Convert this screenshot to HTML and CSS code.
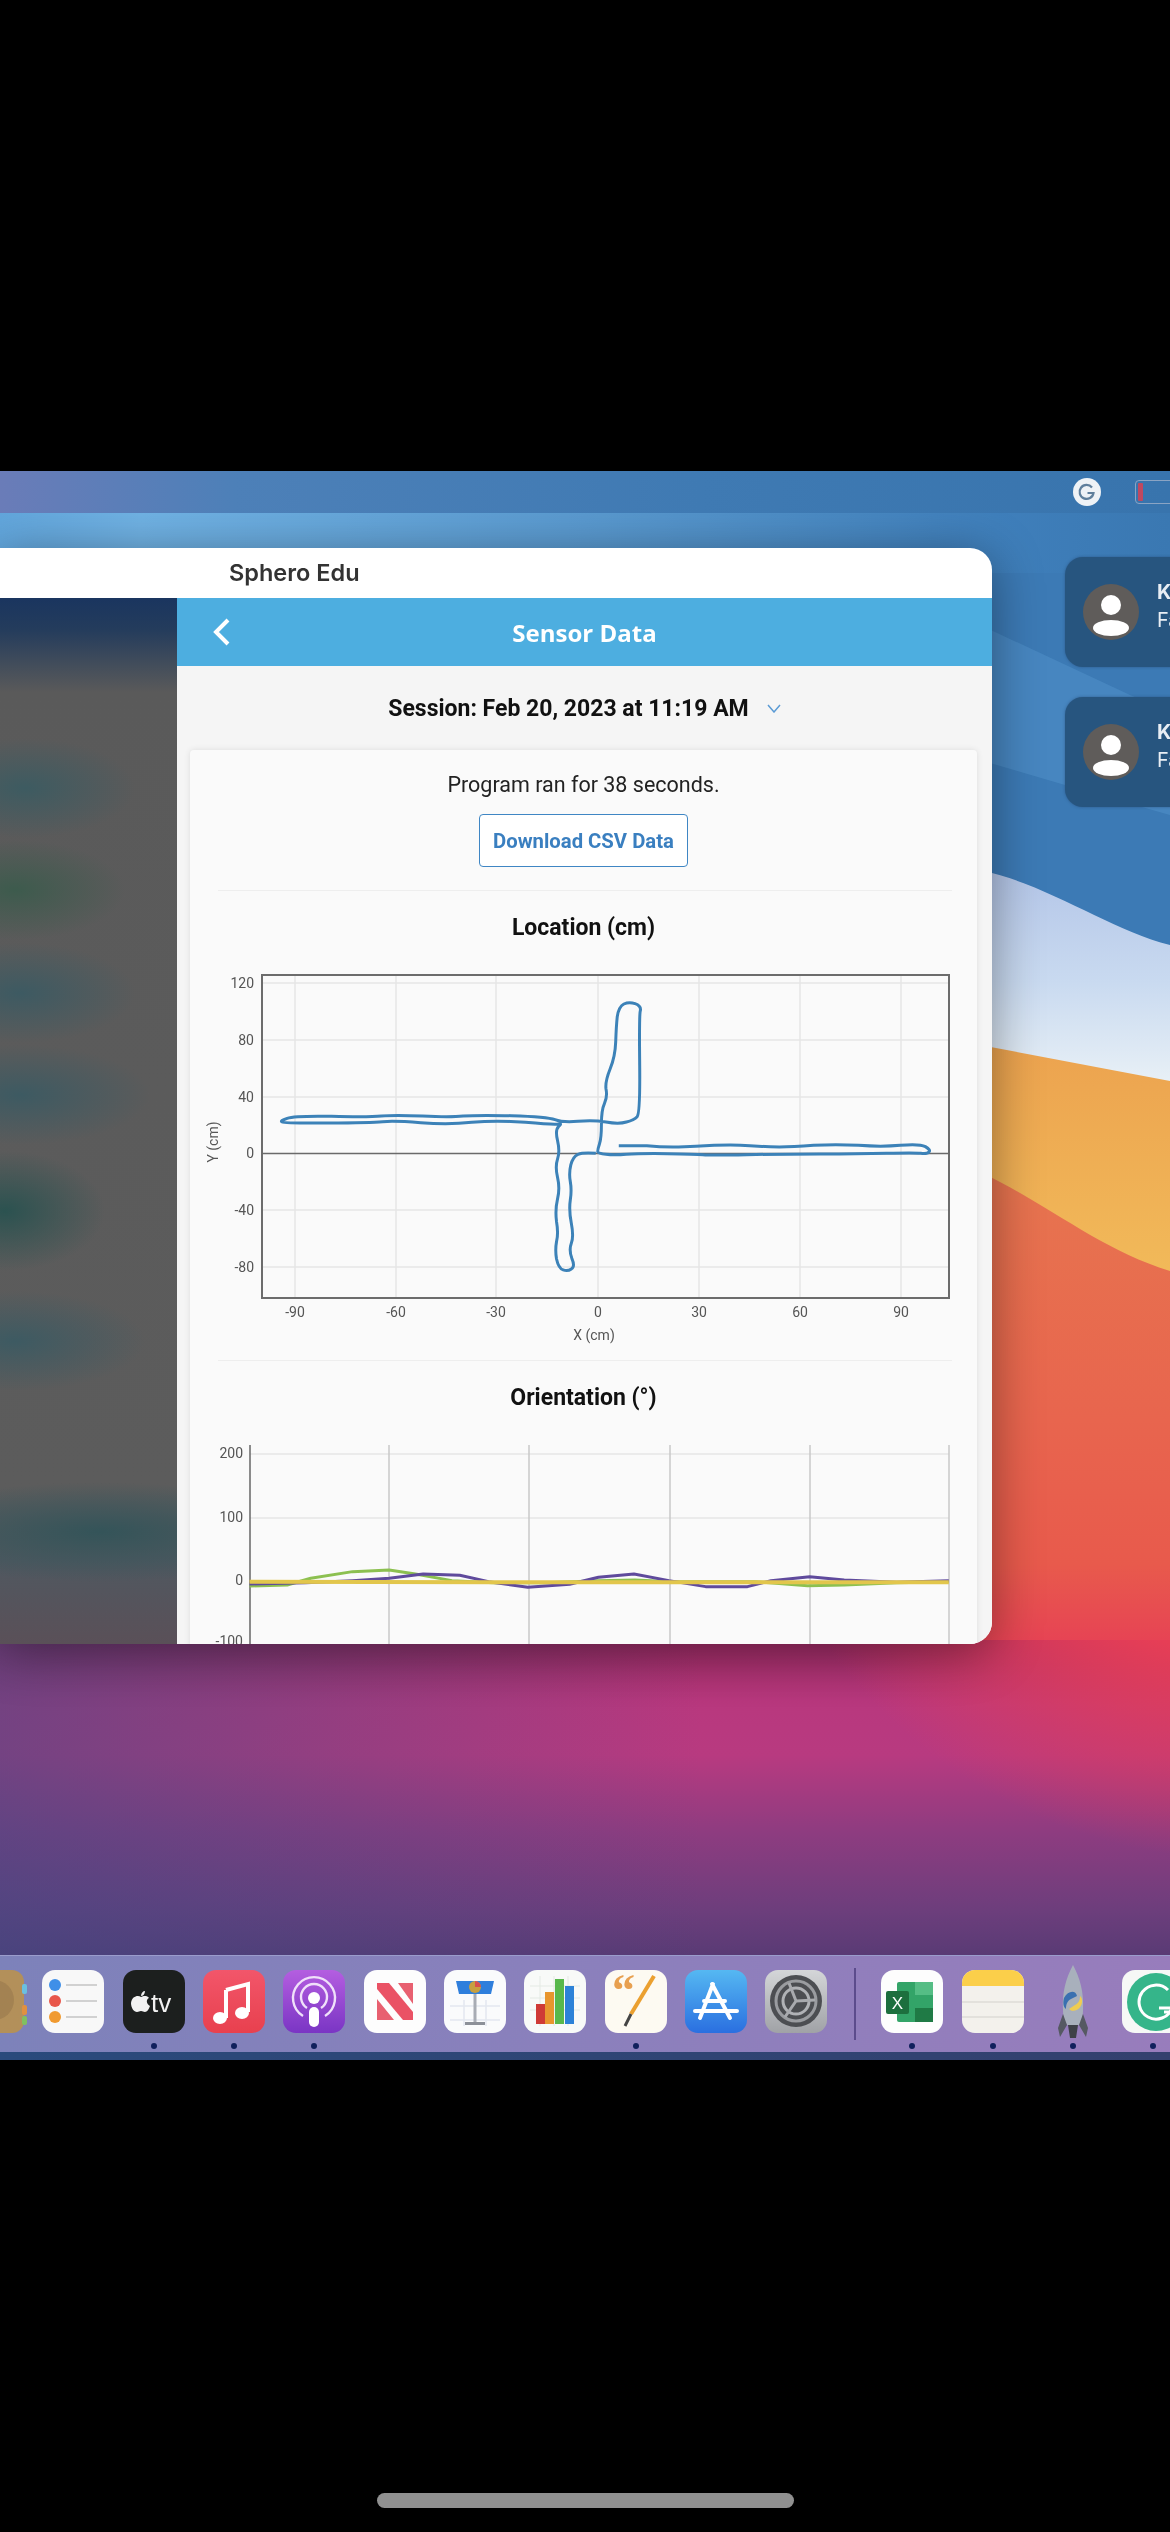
FILE: index.html
```html
<!DOCTYPE html>
<html lang="en">
<head>
    <meta charset="UTF-8">
    <title>Sphero Edu</title>
    <link rel="stylesheet" href="styles.css">
</head>
<body>
    <div class="top-gap"></div>
    <div class="screen">
        <svg class="wallpaper" viewBox="0 471 1170 1589" preserveAspectRatio="none">
            <defs>
                <linearGradient id="topBand" x1="0" x2="1" y1="0" y2="0">
                    <stop offset="0" stop-color="#62a6dc"/>
                    <stop offset="0.12" stop-color="#70b2e4"/>
                    <stop offset="0.5" stop-color="#5a9ad0"/>
                    <stop offset="0.85" stop-color="#3f7fbb"/>
                    <stop offset="1" stop-color="#3a78b2"/>
                </linearGradient>
                <linearGradient id="whiteBand" x1="0" x2="0" y1="0" y2="1">
                    <stop offset="0" stop-color="#b4c6e8"/>
                    <stop offset="0.5" stop-color="#c9daf0"/>
                    <stop offset="1" stop-color="#ecf3f7"/>
                </linearGradient>
                <linearGradient id="orangeBand" x1="0" x2="0" y1="0" y2="1">
                    <stop offset="0" stop-color="#eca34f"/>
                    <stop offset="1" stop-color="#f2bb5a"/>
                </linearGradient>
                <linearGradient id="redBand" gradientUnits="userSpaceOnUse" x1="0" x2="0" y1="1180" y2="1660">
                    <stop offset="0" stop-color="#e7744f"/>
                    <stop offset="0.5" stop-color="#e8654e"/>
                    <stop offset="0.8" stop-color="#e85a4c"/>
                    <stop offset="1" stop-color="#e63e56"/>
                </linearGradient>
                <linearGradient id="lowV" x1="0" x2="0" y1="0" y2="1">
                    <stop offset="0" stop-color="#a02c66"/>
                    <stop offset="0.2" stop-color="#b8387e"/>
                    <stop offset="0.36" stop-color="#b83a80"/>
                    <stop offset="0.6" stop-color="#8e3c80"/>
                    <stop offset="0.85" stop-color="#6c3e7c"/>
                    <stop offset="1" stop-color="#573a74"/>
                </linearGradient>
                <linearGradient id="lowH" x1="0" x2="1" y1="0" y2="0">
                    <stop offset="0" stop-color="#3c4a84" stop-opacity="0.55"/>
                    <stop offset="0.6" stop-color="#3c4a84" stop-opacity="0"/>
                </linearGradient>
                <radialGradient id="lowRed" gradientUnits="userSpaceOnUse" cx="1245" cy="1340" r="520">
                    <stop offset="0.6" stop-color="#e63e56"/>
                    <stop offset="1" stop-color="#e63e56" stop-opacity="0"/>
                </radialGradient>
            </defs>
            <rect x="0" y="471" width="1170" height="1200" fill="#3c7ab5"/>
            <rect x="0" y="513" width="1170" height="60" fill="url(#topBand)"/>
            <path d="M980 625 L1130 695 L1170 712 V815 L1065 785 L980 760 Z" fill="#4b8bc5" opacity="0.7"/>
            <path d="M980 870 C1050 885 1110 930 1170 945 V1095 H980 Z" fill="url(#whiteBand)"/>
            <path d="M980 1045 L1170 1081 V1290 H980 Z" fill="url(#orangeBand)"/>
            <path d="M980 1172 C1050 1205 1100 1250 1170 1271 V1680 H980 Z" fill="url(#redBand)"/>
            <rect x="0" y="1640" width="1170" height="320" fill="url(#lowV)"/>
            <rect x="0" y="1640" width="1170" height="320" fill="url(#lowH)"/>
            <rect x="700" y="1640" width="470" height="320" fill="url(#lowRed)"/>
        </svg>

        <div class="menubar">
            <svg class="menu-g" viewBox="0 0 28 28">
                <circle cx="14" cy="14" r="14" fill="#eef2f6"/>
                <path d="M19 9.5 A7 7 0 1 0 20.5 15 H14.5" fill="none" stroke="#5f7f9c" stroke-width="2.2"/>
            </svg>
            <div class="battery"><span class="battery-level"></span></div>
        </div>

        <div class="desk">
            <div class="window">
                <div class="titlebar">Sphero Edu</div>
                <div class="window-body">
                    <div class="sidebar"></div>
                    <div class="panel">
                        <div class="panel-header">
                            <svg class="back" viewBox="0 0 18 28"><path d="M15 2 L3 14 L15 26" fill="none" stroke="#fff" stroke-width="4"/></svg>
                            <div class="panel-title">Sensor Data</div>
                        </div>
                        <div class="session">
                            <span>Session: Feb 20, 2023 at 11:19 AM</span>
                            <svg class="session-arrow" viewBox="0 0 14 9"><path d="M1 1 L7 8 L13 1" fill="none" stroke="#5b9bd5" stroke-width="1.5"/></svg>
                        </div>
                        <div class="card">
                            <div class="card-top">
                                <p class="ran">Program ran for 38 seconds.</p>
                                <button class="csv">Download CSV Data</button>
                            </div>
                            <div class="divider"></div>
                            <h2 class="chart-title">Location (cm)</h2>
                            <svg class="chart chart-location" viewBox="190 964 787 386">
                                <g class="grid-light">
                                    <path d="M295 975V1298M396 975V1298M496 975V1298M598 975V1298M699 975V1298M800 975V1298M901 975V1298"/>
                                    <path d="M262 983H949M262 1040H949M262 1097H949M262 1210H949M262 1267H949"/>
                                </g>
                                <rect class="plot-box" x="262" y="975" width="687" height="323"/>
                                <path class="zero-line" d="M262 1153.500H949"/>
                                <g class="tick-y">
                                    <text x="254" y="988">120</text>
                                    <text x="254" y="1045">80</text>
                                    <text x="254" y="1102">40</text>
                                    <text x="254" y="1158">0</text>
                                    <text x="254" y="1215">-40</text>
                                    <text x="254" y="1272">-80</text>
                                </g>
                                <g class="tick-x">
                                    <text x="295" y="1317">-90</text>
                                    <text x="396" y="1317">-60</text>
                                    <text x="496" y="1317">-30</text>
                                    <text x="598" y="1317">0</text>
                                    <text x="699" y="1317">30</text>
                                    <text x="800" y="1317">60</text>
                                    <text x="901" y="1317">90</text>
                                    <text x="594" y="1340">X (cm)</text>
                                    <text x="0" y="0" transform="translate(218 1142) rotate(-90)">Y (cm)</text>
                                </g>
                                <g transform="translate(180 900) scale(0.5102 0.3333)">
                                    <path class="trace" d="M860 737 L915 737 Q945 742 977 741 Q1010 740 1047 736 Q1085 733 1117 737 Q1150 741 1175 741 Q1200 741 1242 736 Q1285 732 1330 736 Q1375 741 1412 736 Q1450 731 1461 740 Q1472 750 1468 756 Q1465 762 1452 760 Q1440 758 1385 760 Q1330 762 1255 762 Q1180 762 1110 764 Q1040 766 1025 764 Q1010 762 955 761 Q900 760 875 763 Q850 766 835 763 Q820 760 819 756 Q818 752 822 733 Q826 715 826 672 Q826 630 832 610 Q838 590 835 567 Q833 545 843 507 Q853 470 854 425 Q855 380 857 350 Q860 320 870 312 Q880 305 892 311 Q905 318 902 334 Q900 350 901 495 Q902 640 896 650 Q890 660 875 666 Q860 673 835 666 Q810 660 780 664 Q750 668 735 659 Q720 650 650 647 Q580 645 555 648 Q530 652 475 648 Q420 645 395 648 Q370 652 297 649 Q225 647 210 655 Q195 663 200 666 Q205 670 290 669 Q375 668 397 665 Q420 662 472 668 Q525 675 572 667 Q620 660 677 667 Q735 675 742 672 Q750 670 742 680 Q735 690 740 722 Q745 755 740 777 Q735 800 740 832 Q745 865 740 897 Q735 930 738 965 Q742 1000 738 1025 Q735 1050 738 1077 Q742 1105 751 1110 Q760 1115 767 1107 Q775 1100 768 1075 Q762 1050 767 1030 Q772 1010 767 970 Q762 930 765 900 Q768 870 765 845 Q762 820 766 795 Q770 770 780 763 Q790 757 815 760"/>
                                </g>
                            </svg>
                            <div class="divider"></div>
                            <h2 class="chart-title">Orientation (°)</h2>
                            <svg class="chart chart-orientation" viewBox="190 1434 787 220">
                                <path class="grid-light" d="M250 1454H949M250 1518H949M250 1582H949"/>
                                <path class="grid-dark" d="M389 1445V1654M529 1445V1654M670 1445V1654M810 1445V1654M949 1445V1654"/>
                                <path class="axis-line" d="M250 1445V1654"/>
                                <g class="tick-y">
                                    <text x="243" y="1458">200</text>
                                    <text x="243" y="1522">100</text>
                                    <text x="243" y="1585">0</text>
                                    <text x="243" y="1646">-100</text>
                                </g>
                                <g transform="translate(180 1340) scale(0.523 0.3333)">
                                    <path class="line-green" d="M133 738 L205 735 250 715 330 695 400 690 450 702 520 722 600 728 700 728 800 722 870 720 940 725 1100 725 1200 737 1270 735 1370 728 1470 725"/>
                                    <path class="line-purple" d="M133 732 L240 728 330 722 400 715 465 702 535 706 590 725 665 742 745 733 800 712 868 702 935 722 1005 740 1085 740 1130 722 1204 710 1270 720 1370 727 1470 722"/>
                                    <path class="line-yellow" d="M133 725 L600 727 1470 727"/>
                                </g>
                            </svg>
                        </div>
                    </div>
                </div>
            </div>

            <div class="notifications">
                <div class="notice">
                    <svg class="avatar" viewBox="0 0 56 56">
                        <circle cx="28" cy="28" r="28" fill="#5f5c5a"/>
                        <circle cx="28" cy="21" r="10" fill="#fff"/>
                        <ellipse cx="28" cy="44" rx="18" ry="8" fill="#fff"/>
                    </svg>
                    <div class="notice-text"><b>K</b><span>Fa</span></div>
                </div>
                <div class="notice">
                    <svg class="avatar" viewBox="0 0 56 56">
                        <circle cx="28" cy="28" r="28" fill="#5f5c5a"/>
                        <circle cx="28" cy="21" r="10" fill="#fff"/>
                        <ellipse cx="28" cy="44" rx="18" ry="8" fill="#fff"/>
                    </svg>
                    <div class="notice-text"><b>K</b><span>Fa</span></div>
                </div>
            </div>
        </div>

        <div class="dock">
            <!-- contacts -->
            <div class="dock-item">
                <svg viewBox="0 0 66 63">
                    <rect x="0" y="0" width="62" height="63" rx="12" fill="#b3905a"/>
                    <circle cx="32" cy="30" r="20" fill="#a38252"/>
                    <rect x="60" y="14" width="5" height="10" rx="2" fill="#6ac0e0"/>
                    <rect x="60" y="35" width="5" height="10" rx="2" fill="#e09040"/>
                    <rect x="60" y="46" width="5" height="9" rx="2" fill="#80c060"/>
                </svg>
                <i class="dot off"></i>
            </div>
            <!-- reminders -->
            <div class="dock-item">
                <svg viewBox="0 0 62 63">
                    <rect width="62" height="63" rx="13" fill="#f8f8f8"/>
                    <circle cx="13" cy="15" r="6" fill="#3f8fe8"/>
                    <circle cx="13" cy="31" r="6" fill="#e8564a"/>
                    <circle cx="13" cy="47" r="6" fill="#f09a30"/>
                    <path d="M24 15H55M24 31H55M24 47H55" stroke="#c4c4c4" stroke-width="1.5"/>
                </svg>
                <i class="dot off"></i>
            </div>
            <!-- tv -->
            <div class="dock-item">
                <svg viewBox="0 0 62 63">
                    <rect width="62" height="63" rx="13" fill="#1c1f1e"/>
                    <path d="M18 27 C15 25 9 26 8 33 C8 38 11 42 14 42 C16 42 16 41 18 41 C20 41 20 42 22 42 C24 42 26 39 27 36 C23 34 23 29 26 28 C24 25 20 26 18 27 Z M18 26 C18 23 20 21 22 21 C22 24 20 26 18 26 Z" fill="#f2f2f2"/>
                    <text class="tv-text" x="28" y="42">tv</text>
                </svg>
                <i class="dot"></i>
            </div>
            <!-- music -->
            <div class="dock-item">
                <svg viewBox="0 0 62 63">
                    <defs><linearGradient id="musicBg" x1="0" x2="0" y1="0" y2="1"><stop offset="0" stop-color="#f2566a"/><stop offset="1" stop-color="#e8404e"/></linearGradient></defs>
                    <rect width="62" height="63" rx="13" fill="url(#musicBg)"/>
                    <path d="M23 20 L45 14 V42 M23 20 V48" fill="none" stroke="#fff" stroke-width="4"/>
                    <ellipse cx="17" cy="48" rx="7" ry="6" fill="#fff"/>
                    <ellipse cx="39" cy="43" rx="7" ry="6" fill="#fff"/>
                </svg>
                <i class="dot"></i>
            </div>
            <!-- podcasts -->
            <div class="dock-item">
                <svg viewBox="0 0 62 63">
                    <defs><linearGradient id="podBg" x1="0" x2="0" y1="0" y2="1"><stop offset="0" stop-color="#b45ee0"/><stop offset="1" stop-color="#7a35c4"/></linearGradient></defs>
                    <rect width="62" height="63" rx="13" fill="url(#podBg)"/>
                    <path d="M20 46 A21 21 0 1 1 42 46 M24 38 A13 13 0 1 1 38 38" fill="none" stroke="#f0e0fa" stroke-width="2.4"/>
                    <circle cx="31" cy="28" r="6" fill="#fff"/>
                    <rect x="26" y="37" width="10" height="20" rx="5" fill="#fff"/>
                </svg>
                <i class="dot"></i>
            </div>
            <!-- news -->
            <div class="dock-item">
                <svg viewBox="0 0 62 63">
                    <rect width="62" height="63" rx="13" fill="#fdfdfd"/>
                    <path d="M13 29 L30 50 H13 Z M34 13 H49 V34 Z" fill="#e86070"/>
                    <path d="M13 13 H25 L49 42 V50 H39 L13 19 Z" fill="#ea5265"/>
                </svg>
                <i class="dot off"></i>
            </div>
            <!-- keynote -->
            <div class="dock-item">
                <svg viewBox="0 0 62 63">
                    <rect width="62" height="63" rx="13" fill="#fafbfc"/>
                    <path d="M6 36H56M6 50H56M20 30V56M42 30V56" stroke="#e4e8f0" stroke-width="1.5"/>
                    <path d="M12 11 H50 L47 24 H15 Z" fill="#2f7fdc"/>
                    <circle cx="31" cy="17" r="6" fill="#c8a040"/>
                    <path d="M31 17 V11 A6 6 0 0 1 37 17 Z" fill="#d85050"/>
                    <rect x="29.500" y="24" width="3" height="28" fill="#a8acb4"/>
                    <rect x="21" y="52" width="20" height="3" fill="#8c9098"/>
                </svg>
                <i class="dot off"></i>
            </div>
            <!-- numbers -->
            <div class="dock-item">
                <svg viewBox="0 0 62 63">
                    <rect width="62" height="63" rx="13" fill="#f8faf8"/>
                    <path d="M6 16H56M6 28H56M6 40H56M16 6V56M30 6V56M44 6V56" stroke="#e4eae4"/>
                    <rect x="12" y="34" width="9" height="20" fill="#cf3a36"/>
                    <rect x="21" y="22" width="9" height="32" fill="#e8962e"/>
                    <rect x="31" y="9" width="9" height="45" fill="#58b84c"/>
                    <rect x="41" y="16" width="9" height="38" fill="#2c82d8"/>
                </svg>
                <i class="dot off"></i>
            </div>
            <!-- pages -->
            <div class="dock-item">
                <svg viewBox="0 0 62 63">
                    <rect width="62" height="63" rx="13" fill="#fdfaf2"/>
                    <text class="quote" x="7" y="36">“</text>
                    <path d="M49 6 L26 44" stroke="#eba030" stroke-width="4"/>
                    <path d="M26 44 L20 56" stroke="#444" stroke-width="3"/>
                </svg>
                <i class="dot"></i>
            </div>
            <!-- app store -->
            <div class="dock-item">
                <svg viewBox="0 0 62 63">
                    <defs><linearGradient id="storeBg" x1="0" x2="0" y1="0" y2="1"><stop offset="0" stop-color="#55b8f2"/><stop offset="1" stop-color="#2a6fe0"/></linearGradient></defs>
                    <rect width="62" height="63" rx="13" fill="url(#storeBg)"/>
                    <path d="M28 14 L15 48 M27 14 L45 48 M10 41 H52 M19 31 H40" stroke="#fff" stroke-width="4" stroke-linecap="round" fill="none"/>
                </svg>
                <i class="dot off"></i>
            </div>
            <!-- settings -->
            <div class="dock-item">
                <svg viewBox="0 0 62 63">
                    <defs><linearGradient id="gearBg" x1="0" x2="0" y1="0" y2="1"><stop offset="0" stop-color="#d4d6d8"/><stop offset="1" stop-color="#a0a2a6"/></linearGradient></defs>
                    <rect width="62" height="63" rx="13" fill="url(#gearBg)"/>
                    <circle cx="31" cy="31" r="26" fill="#4c4e52"/>
                    <circle cx="31" cy="31" r="20" fill="none" stroke="#9a9ca0" stroke-width="3"/>
                    <circle cx="31" cy="31" r="13" fill="none" stroke="#b0b2b6" stroke-width="3"/>
                    <path d="M31 31 L24 13 M31 31 L50 30 M31 31 L20 47" stroke="#a8aaae" stroke-width="3"/>
                </svg>
                <i class="dot off"></i>
            </div>
            <div class="dock-sep"></div>
            <!-- excel -->
            <div class="dock-item">
                <svg viewBox="0 0 62 63">
                    <rect width="62" height="63" rx="13" fill="#fdfdfd"/>
                    <rect x="16" y="12" width="36" height="40" rx="2" fill="#33a468"/>
                    <rect x="34" y="12" width="18" height="13" fill="#55bd85"/>
                    <rect x="34" y="38" width="18" height="14" fill="#1f7a45"/>
                    <rect x="5" y="21" width="23" height="23" rx="2" fill="#1d6f3e"/>
                    <text class="excel-x" x="16.500" y="39">X</text>
                </svg>
                <i class="dot"></i>
            </div>
            <!-- notes -->
            <div class="dock-item">
                <svg viewBox="0 0 62 63">
                    <rect width="62" height="63" rx="13" fill="#f3f1ec"/>
                    <path d="M0 16 V13 A13 13 0 0 1 13 0 H49 A13 13 0 0 1 62 13 V16 Z" fill="#fbcf4a"/>
                    <path d="M0 32H62M0 47H62" stroke="#dedcd6" stroke-width="1.500"/>
                </svg>
                <i class="dot"></i>
            </div>
            <!-- python launcher -->
            <div class="dock-item">
                <svg class="rocket" viewBox="0 0 62 63">
                    <path d="M31 -5 C24 8 20 22 21 40 C21 48 23 52 25 55 H37 C39 52 41 48 41 40 C42 22 38 8 31 -5 Z" fill="#a8b0bc"/>
                    <path d="M21 44 L16 58 L18 67 L25 55 Z M41 44 L46 58 L44 67 L37 55 Z" fill="#555962"/>
                    <path d="M26 55 L28 68 H34 L36 55 Z" fill="#3e4148"/>
                    <path d="M22 28 C26 20 34 20 35 26 L29 29 C25 31 24 35 24 39 C21 37 21 32 22 28 Z" fill="#3a70b0"/>
                    <path d="M40 30 C41 38 32 44 27 39 L33 35 C37 33 38 30 38 26 C39 27 40 28 40 30 Z" fill="#f0cc50"/>
                </svg>
                <i class="dot"></i>
            </div>
            <!-- grammarly -->
            <div class="dock-item">
                <svg viewBox="0 0 62 63">
                    <rect width="62" height="63" rx="13" fill="#f6f8f6"/>
                    <circle cx="34" cy="32" r="29" fill="#35b58a"/>
                    <path d="M46 20 A17 17 0 1 0 50 38 H37" fill="none" stroke="#fff" stroke-width="3"/>
                    <path d="M50 32 L53 42 L42 42" fill="none" stroke="#fff" stroke-width="3"/>
                </svg>
                <i class="dot"></i>
            </div>
        </div>
        <div class="dock-edge"></div>
    </div>
    <div class="bottom-gap"><div class="home-bar"></div></div>
</body>
</html>
```

FILE: styles.css
```css
body {
    margin: 0;
    height: 2532px;
    overflow: hidden;
    background: #000;
    font-family: Roboto, "Liberation Sans", sans-serif;
}

.top-gap {
    height: 471px;
}

.screen {
    position: relative;
    height: 1589px;
    overflow: hidden;
    filter: blur(0.6px);
}

.wallpaper {
    position: absolute;
    top: 0;
    left: 0;
    width: 1170px;
    height: 1589px;
}

.menubar {
    position: relative;
    display: flex;
    align-items: center;
    height: 42px;
    padding-left: 1073px;
    gap: 34px;
    background: linear-gradient(90deg, #6a7cb8 0%, #4d80b8 20%, #3f7ab3 60%, #3874ad 100%);
}

.menu-g {
    width: 28px;
    height: 28px;
    flex-shrink: 0;
}

.battery {
    flex-shrink: 0;
    width: 60px;
    height: 18px;
    border: 1.5px solid #8aa4c4;
    border-radius: 4px;
    padding: 2px;
}

.battery-level {
    display: block;
    width: 5px;
    height: 100%;
    border-radius: 1px;
    background: #c04860;
}

.desk {
    position: relative;
    display: flex;
    align-items: flex-start;
    height: 1442px;
    overflow: hidden;
}

.window {
    flex-shrink: 0;
    width: 992px;
    height: 1096px;
    margin-top: 35px;
    overflow: hidden;
    border-radius: 0 22px 22px 0;
    background: #fff;
    box-shadow: 0 8px 50px rgba(0, 0, 0, 0.4);
}

.titlebar {
    height: 50px;
    padding-left: 229px;
    line-height: 50px;
    font-family: Inter, sans-serif;
    font-size: 23.500px;
    font-weight: 600;
    color: #333;
}

.window-body {
    display: flex;
    height: 1046px;
}

.sidebar {
    width: 177px;
    flex-shrink: 0;
    background:
        radial-gradient(ellipse 110px 50px at 25px 190px, #3d5b61, transparent),
        radial-gradient(ellipse 110px 50px at 15px 292px, #3d5b4d, transparent),
        radial-gradient(ellipse 115px 50px at 20px 395px, #3d5a62, transparent),
        radial-gradient(ellipse 130px 50px at 20px 497px, #3d5a62, transparent),
        radial-gradient(ellipse 100px 60px at 5px 613px, #2b5250, transparent),
        radial-gradient(ellipse 130px 50px at 15px 743px, #3d5a62, transparent),
        radial-gradient(ellipse 220px 50px at 100px 934px, #345459, transparent),
        linear-gradient(180deg, #1a355f 0%, #243c5c 3%, #5a5a5a 9%, #5c5c5c 85%, #505860 92%, #5a5058 100%);
}

.panel {
    flex: 1;
    min-width: 0;
    background: #f5f5f5;
}

.panel-header {
    display: grid;
    grid-template-columns: 1fr auto 1fr;
    align-items: center;
    height: 68px;
    padding: 0 36px;
    background: #4daee0;
}

.back {
    width: 18px;
    height: 28px;
}

.panel-title {
    font-family: "Open Sans", sans-serif;
    font-size: 24px;
    font-weight: 700;
    color: #fff;
}

.session {
    display: flex;
    align-items: center;
    justify-content: center;
    gap: 18px;
    height: 84px;
    font-size: 23px;
    font-weight: 700;
    color: #111;
}

.session-arrow {
    width: 14px;
    height: 9px;
}

.card {
    height: 900px;
    margin: 0 15px 0 13px;
    border-radius: 4px 4px 0 0;
    background: #fafafa;
    box-shadow: 0 0 6px rgba(0, 0, 0, 0.1);
}

.card-top {
    display: flex;
    flex-direction: column;
    align-items: center;
    height: 140px;
}

.ran {
    margin: 20px 0 15px;
    line-height: 29px;
    font-size: 21.500px;
    color: #222;
}

.csv {
    width: 209px;
    height: 53px;
    padding: 0;
    border: 1.5px solid #3f86c4;
    border-radius: 4px;
    background: #fff;
    font-family: inherit;
    font-size: 20.300px;
    font-weight: 700;
    color: #3a7fc0;
}

.divider {
    height: 1px;
    margin: 0 25px 0 28px;
    background: #eeeeee;
}

.chart-title {
    margin: 0;
    height: 73px;
    line-height: 73px;
    text-align: center;
    font-size: 23px;
    font-weight: 700;
    color: #111;
}

.chart {
    display: block;
    width: 787px;
}

.chart-location {
    height: 386px;
    margin-bottom: 10px;
}

.chart-orientation {
    height: 220px;
}

.grid-light {
    fill: none;
    stroke: #e6e6e6;
    stroke-width: 1.5;
}

.grid-dark {
    fill: none;
    stroke: #c9c9c9;
    stroke-width: 1.5;
}

.plot-box {
    fill: none;
    stroke: #6c6c6c;
    stroke-width: 2;
}

.zero-line {
    fill: none;
    stroke: #6a6a6a;
    stroke-width: 1.5;
}

.axis-line {
    fill: none;
    stroke: #666;
    stroke-width: 1.5;
}

.tick-y text,
.tick-x text {
    font-size: 14px;
    fill: #555;
}

.tick-y text {
    text-anchor: end;
}

.tick-x text {
    text-anchor: middle;
}

.trace,
.line-green,
.line-purple,
.line-yellow {
    fill: none;
    stroke-linejoin: round;
    vector-effect: non-scaling-stroke;
}

.trace {
    stroke: #3c82b8;
    stroke-width: 3;
}

.line-green {
    stroke: #8cc050;
    stroke-width: 3;
}

.line-purple {
    stroke: #5f4a9c;
    stroke-width: 3;
}

.line-yellow {
    stroke: #e2c64c;
    stroke-width: 4;
}

.notifications {
    display: flex;
    flex-direction: column;
    gap: 30px;
    margin: 44px 0 0 73px;
    flex-shrink: 0;
}

.notice {
    display: flex;
    align-items: center;
    gap: 18px;
    width: 320px;
    height: 110px;
    padding-left: 18px;
    box-sizing: border-box;
    border-radius: 18px;
    background: #27557f;
    box-shadow: 0 0 3px rgba(30, 60, 100, 0.5);
}

.avatar {
    width: 56px;
    height: 56px;
    flex-shrink: 0;
}

.notice-text {
    display: flex;
    flex-direction: column;
    gap: 4px;
    margin-bottom: 12px;
    font-family: Inter, sans-serif;
    font-size: 20px;
    color: #e8eef4;
}

.dock {
    position: relative;
    display: flex;
    align-items: flex-start;
    gap: 18px;
    height: 82px;
    padding-top: 14px;
    margin-left: -38px;
    width: 1300px;
    background: linear-gradient(90deg, #7c82ba 0%, #8a80bc 45%, #9a7cbc 100%);
    border-top: 1px solid #9a9ccc;
}

.dock-item {
    width: 62.300px;
    flex-shrink: 0;
    display: flex;
    flex-direction: column;
    align-items: center;
}

.dock-item svg {
    display: block;
    width: 62px;
    height: 63px;
    overflow: visible;
}

.dock-item:first-child svg {
    width: 66px;
    margin-right: -4px;
}

.dot {
    display: block;
    width: 6px;
    height: 6px;
    margin-top: 10px;
    border-radius: 50%;
    background: #10205c;
}

.dot.off {
    visibility: hidden;
}

.dock-sep {
    flex-shrink: 0;
    width: 2px;
    height: 72px;
    margin: -2px 7px 0 9px;
    background: #5c4c8c;
}

.dock-edge {
    position: relative;
    height: 8px;
    background: linear-gradient(90deg, #2a4a7c, #34406e);
}

.tv-text {
    font-family: "Liberation Sans", sans-serif;
    font-size: 26px;
    fill: #f2f2f2;
}

.quote {
    font-family: "Liberation Serif", serif;
    font-size: 46px;
    font-weight: 700;
    fill: #e8a050;
}

.excel-x {
    font-family: "Liberation Sans", sans-serif;
    font-size: 17px;
    text-anchor: middle;
    fill: #fff;
}

.bottom-gap {
    display: flex;
    justify-content: center;
    padding-top: 433px;
}

.home-bar {
    width: 417px;
    height: 15px;
    border-radius: 8px;
    background: #909090;
}
```
